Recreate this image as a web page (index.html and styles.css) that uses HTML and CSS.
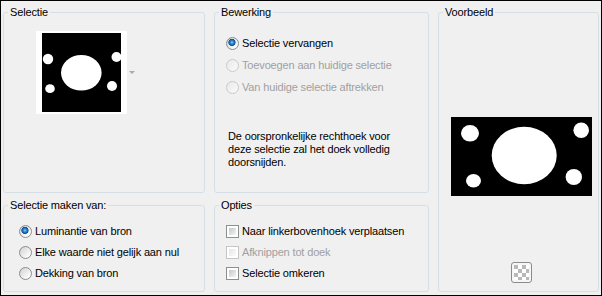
FILE: index.html
```html
<!DOCTYPE html>
<html lang="nl">
<head>
    <meta charset="UTF-8">
    <meta name="viewport" content="width=device-width, initial-scale=1.0">
    <title>Selectie maken van masker</title>
    <link rel="stylesheet" href="styles.css">
</head>
<body>
    <div class="dialog">
        <fieldset class="group group-source">
            <legend>Selectie</legend>
            <div class="group-body source">
                <div class="thumb">
                    <svg width="79" height="79" viewBox="0 0 79 79">
                        <rect width="79" height="79" fill="#000"/>
                        <ellipse cx="39.3" cy="39.8" rx="20.3" ry="17.8" fill="#fff"/>
                        <circle cx="6" cy="26" r="5.2" fill="#fff"/>
                        <circle cx="74.5" cy="24" r="5" fill="#fff"/>
                        <ellipse cx="8" cy="55.7" rx="4.8" ry="4.4" fill="#fff"/>
                        <circle cx="70" cy="53" r="5" fill="#fff"/>
                    </svg>
                </div>
                <span class="drop-arrow"></span>
            </div>
        </fieldset>

        <fieldset class="group group-mode">
            <legend>Bewerking</legend>
            <div class="group-body mode">
                <label class="option"><input type="radio" name="mode" checked>Selectie vervangen</label>
                <label class="option disabled"><input type="radio" name="mode" disabled>Toevoegen aan huidige selectie</label>
                <label class="option disabled"><input type="radio" name="mode" disabled>Van huidige selectie aftrekken</label>
                <p class="note">De oorspronkelijke rechthoek voor<br>deze selectie zal het doek volledig<br>doorsnijden.</p>
            </div>
        </fieldset>

        <fieldset class="group group-preview">
            <legend>Voorbeeld</legend>
            <div class="group-body preview">
                <svg class="preview-img" width="141" height="79" viewBox="0 0 141 79">
                    <rect width="141" height="79" fill="#000"/>
                    <ellipse cx="73.2" cy="38.5" rx="32.5" ry="28.8" fill="#fff"/>
                    <ellipse cx="19" cy="16.3" rx="9" ry="8.3" fill="#fff"/>
                    <ellipse cx="130.2" cy="13.3" rx="7.8" ry="7.7" fill="#fff"/>
                    <ellipse cx="22.5" cy="63.8" rx="7.5" ry="6.8" fill="#fff"/>
                    <ellipse cx="122.8" cy="60" rx="8.2" ry="8" fill="#fff"/>
                </svg>
                <button class="bg-toggle" type="button" title="Transparantie">
                    <svg width="21" height="21" viewBox="0 0 21 21">
                        <rect x="0.5" y="0.5" width="20" height="20" rx="2.5" fill="#f6f6f6" stroke="#8b8b8b"/>
                        <rect x="3" y="3" width="15" height="15" fill="#fff"/>
                        <path d="M3 3h4v4H3zM11 3h4v4h-4zM7 7h4v4H7zM15 7h3v4h-3zM3 11h4v4H3zM11 11h4v4h-4zM7 15h4v3H7zM15 15h3v3h-3z" fill="#b9b9b9"/>
                    </svg>
                </button>
            </div>
        </fieldset>

        <fieldset class="group group-from">
            <legend>Selectie maken van:</legend>
            <div class="group-body from">
                <label class="option"><input type="radio" name="from" checked>Luminantie van bron</label>
                <label class="option"><input type="radio" name="from">Elke waarde niet gelijk aan nul</label>
                <label class="option"><input type="radio" name="from">Dekking van bron</label>
            </div>
        </fieldset>

        <fieldset class="group group-options">
            <legend>Opties</legend>
            <div class="group-body options">
                <label class="option"><input type="checkbox">Naar linkerbovenhoek verplaatsen</label>
                <label class="option disabled"><input type="checkbox" disabled>Afknippen tot doek</label>
                <label class="option"><input type="checkbox">Selectie omkeren</label>
            </div>
        </fieldset>
    </div>
</body>
</html>
```

FILE: styles.css
```css
* {
    box-sizing: border-box;
}

body {
    margin: 0;
    padding: 0;
    font-family: "Liberation Sans", Arial, sans-serif;
    font-size: 11px;
    line-height: 13px;
    letter-spacing: -0.15px;
    color: #000;
}

.dialog {
    width: 602px;
    height: 296px;
    border: 1px solid #000;
    background: #f0f0f0;
    padding: 5px 2px 3px 2px;
    display: grid;
    grid-template-columns: 202px 215px 161px;
    grid-template-rows: 187px 93px;
    column-gap: 9px;
    row-gap: 6px;
}

.group {
    margin: 0;
    padding: 0;
    min-width: 0;
    border: 1px solid #d5dfe5;
    border-radius: 3px;
    display: flex;
    flex-direction: column;
}

.group legend {
    margin-left: 4px;
    padding: 0 2px;
    line-height: 13px;
}

.group-source { grid-column: 1; grid-row: 1; }
.group-mode { grid-column: 2; grid-row: 1; }
.group-preview { grid-column: 3; grid-row: 1 / span 2; }
.group-from { grid-column: 1; grid-row: 2; }
.group-options { grid-column: 2; grid-row: 2; }

/* Selectie */
.source {
    padding: 12px 0 0 32px;
    display: flex;
    align-items: center;
}

.thumb {
    width: 91px;
    height: 83px;
    background: #fff;
    padding: 2px 6px;
}

.thumb svg {
    display: block;
}

.drop-arrow {
    margin-left: 2px;
    width: 0;
    height: 0;
    border-left: 3px solid transparent;
    border-right: 3px solid transparent;
    border-top: 3px solid #a9a9a9;
}

/* radio / checkbox rows */
.option {
    display: flex;
    align-items: center;
    gap: 3px;
    height: 21px;
    white-space: nowrap;
}

.option.disabled {
    color: #a0a0a0;
}

.option input {
    appearance: none;
    -webkit-appearance: none;
    width: 13px;
    height: 13px;
    margin: 0;
    flex: none;
}

input[type="radio"] {
    border: 1px solid #8a8c8e;
    border-radius: 50%;
    background: linear-gradient(135deg, #cfd1d3, #fbfbfb 80%);
}

input[type="radio"]:checked {
    background:
        radial-gradient(circle at 45% 40%, #8fd6ff 0, #2d8bd6 1.5px, #114f90 3.3px, transparent 3.9px),
        linear-gradient(135deg, #cfd1d3, #fbfbfb 80%);
}

input[type="radio"]:disabled {
    border-color: #cacaca;
    background: linear-gradient(135deg, #e9e9e9, #fafafa);
}

input[type="checkbox"] {
    border: 1px solid #8e8f8f;
    padding: 2px;
    background: linear-gradient(135deg, #c3c7cc, #f4f4f4) content-box, #fff;
}

input[type="checkbox"]:disabled {
    border-color: #c5c5c5;
    background: linear-gradient(135deg, #e6e6e6, #fafafa) content-box, #fff;
}

/* Bewerking */
.mode {
    padding: 13px 0 0 11px;
}

.mode .option {
    height: 22px;
}

.note {
    margin: 32px 0 0 2px;
}

/* Voorbeeld */
.preview {
    padding: 98px 0 0 6px;
    display: flex;
    flex-direction: column;
    align-items: center;
}

.preview-img {
    display: block;
}

.bg-toggle {
    margin-top: 66px;
    padding: 0;
    border: 0;
    background: none;
    width: 21px;
    height: 21px;
}

.bg-toggle svg {
    display: block;
}

/* Selectie maken van / Opties */
.from {
    padding: 9px 0 0 15px;
}

.options {
    padding: 9px 0 0 11px;
}
```
